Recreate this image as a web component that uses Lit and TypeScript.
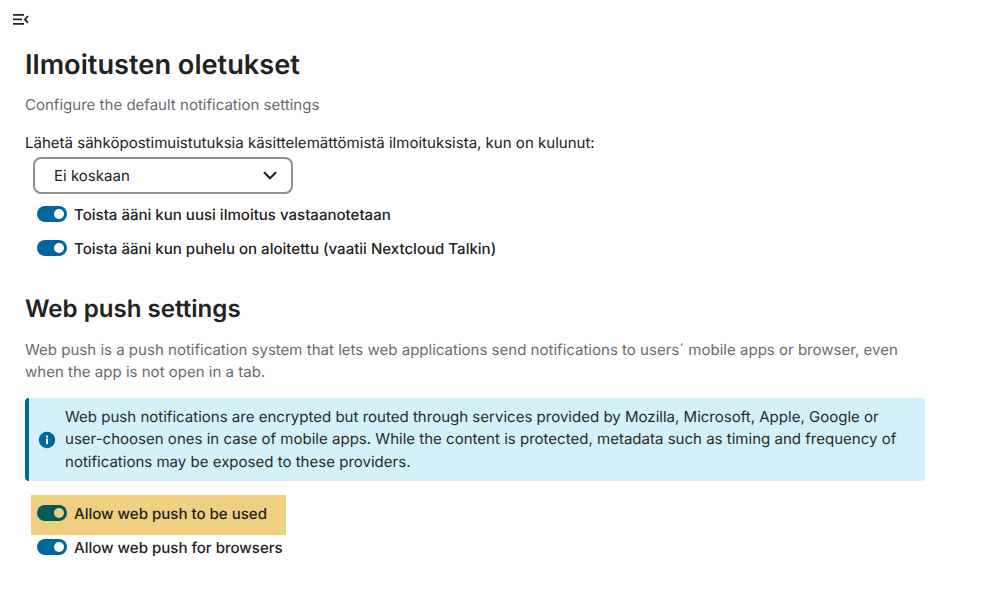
import { LitElement, html, css } from "lit";
import { customElement } from "lit/decorators.js";

@customElement("toggle-row")
class ToggleRow extends LitElement {
  static properties = { label: {}, highlight: { type: Boolean } };
  label = "";
  highlight = false;
  static styles = css`
    :host { display: block; margin-left: 6px; }
    .row { display: inline-flex; align-items: center; vertical-align: top; gap: 7px; height: 34px; padding: 0 6px; font-weight: 500; font-size: 15.06px; color: #222; }
    .row.hl { background: #f0cf80; box-sizing: border-box; height: 40px; padding: 1px 19px 5px 6px; margin-bottom: -5px; }
    .track { width: 30px; height: 16px; border-radius: 8px; background: #00679e; position: relative; flex: none; }
    .hl .track { background: #005a5a; }
    .knob { position: absolute; right: 3px; top: 3px; width: 10px; height: 10px; border-radius: 50%; background: #fff; }
    .hl .knob { background: #f0cf80; }
  `;
  render() {
    return html`<div class="row ${this.highlight ? "hl" : ""}"><span class="track"><span class="knob"></span></span><span>${this.label}</span></div>`;
  }
}

@customElement("app-root")
class AppRoot extends LitElement {
  static styles = css`
    :host { display: block; font-family: Inter, "Noto Sans", sans-serif; font-size: 15.04px; color: #222; background: #fff; height: 598px; overflow: hidden; text-rendering: geometricPrecision; }
    .topbar { height: 38px; display: flex; align-items: center; padding-left: 13px; }
    .topbar svg { display: block; }
    main { padding: 1px 56px 0 25px; }
    h2 { margin: 0; font-weight: 600; color: #222; }
    h2.first { font-size: 27.2px; line-height: 52px; }
    h2.second { font-size: 24.1px; line-height: 36px; margin-top: 26px; }
    .desc { color: #6b6b6b; line-height: 23px; margin: 0; }
    .first + .desc { margin-top: 2px; }
    .second + .desc { margin-top: 12px; line-height: 22px; }
    .lbl { margin: 15px 0 0; line-height: 23px; }
    .select { margin: 3px 0 0 8px; width: 260px; height: 37px; box-sizing: border-box; border: 2px solid #8f8f8f; border-radius: 8px; display: flex; align-items: center; justify-content: space-between; padding: 0 14px 0 19px; }
    .select svg { display: block; }
    .toggles { margin: 3px 0 0 0; }
    .notice { margin-top: 15px; width: 900px; height: 83px; box-sizing: border-box; background: #d4f1fa; border-left: 4px solid #00679e; border-radius: 4px; display: flex; align-items: center; gap: 9px; padding: 0 20px 0 9px; line-height: 22.5px; color: #2a2a2a; }
    .notice svg { flex: none; display: block; }
    .push { margin: 14px 0 0 0; }
  `;
  render() {
    return html`
      <div class="topbar">
        <svg width="16" height="11" viewBox="0 0 16 11" fill="none" stroke="#222" stroke-width="1.7"><path d="M0 .9H11M0 5.4H9M0 9.9H11M15 2 L11.8 5.4 L15 8.8"/></svg>
      </div>
      <main>
        <h2 class="first">Ilmoitusten oletukset</h2>
        <p class="desc">Configure the default notification settings</p>
        <p class="lbl">Lähetä sähköpostimuistutuksia käsittelemättömistä ilmoituksista, kun on kulunut:</p>
        <div class="select"><span>Ei koskaan</span>
          <svg width="14" height="9" viewBox="0 0 14 9" fill="none" stroke="#222" stroke-width="2.2"><path d="M1 1.3 L7 7.3 L13 1.3"/></svg>
        </div>
        <div class="toggles">
          <toggle-row label="Toista ääni kun uusi ilmoitus vastaanotetaan"></toggle-row>
          <toggle-row label="Toista ääni kun puhelu on aloitettu (vaatii Nextcloud Talkin)"></toggle-row>
        </div>
        <h2 class="second">Web push settings</h2>
        <p class="desc">Web push is a push notification system that lets web applications send notifications to users´ mobile apps or browser, even<br />when the app is not open in a tab.</p>
        <div class="notice">
          <svg width="18" height="18" viewBox="0 0 18 18"><circle cx="9" cy="9" r="8.2" fill="#00679e"/><rect x="8" y="7.6" width="2" height="5.6" fill="#fff"/><rect x="8" y="4.6" width="2" height="2" fill="#fff"/></svg>
          <div>Web push notifications are encrypted but routed through services provided by Mozilla, Microsoft, Apple, Google or user-choosen ones in case of mobile apps. While the content is protected, metadata such as timing and frequency of notifications may be exposed to these providers.</div>
        </div>
        <div class="push">
          <toggle-row highlight label="Allow web push to be used"></toggle-row>
          <toggle-row label="Allow web push for browsers"></toggle-row>
        </div>
      </main>
    `;
  }
}
